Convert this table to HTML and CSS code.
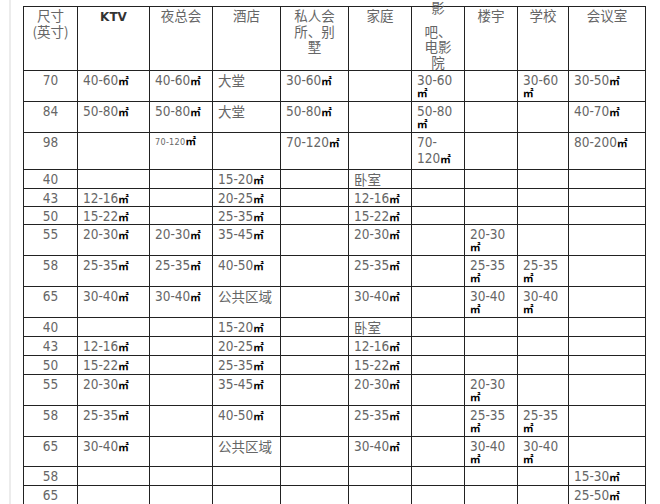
FILE: index.html
```html
<!DOCTYPE html>
<html lang="zh-CN">
<head>
<meta charset="utf-8">
<title>尺寸参考</title>
<link rel="stylesheet" href="styles.css">
</head>
<body>
<div class="page">
<table class="spec">
  <colgroup>
    <col class="c-size"><col class="c-ktv"><col class="c-club"><col class="c-hotel"><col class="c-villa">
    <col class="c-home"><col class="c-film"><col class="c-bldg"><col class="c-school"><col class="c-meet">
  </colgroup>
  <tr class="head">
    <th>尺寸<br>(英寸)</th>
    <th class="latin">KTV</th>
    <th>夜总会</th>
    <th>酒店</th>
    <th>私人会<br>所、别<br>墅</th>
    <th>家庭</th>
    <th><span class="lift">影</span><br>吧、<br>电影<br>院</th>
    <th>楼宇</th>
    <th>学校</th>
    <th>会议室</th>
  </tr>
  <tr class="r31">
    <td class="size"><span class="n">70</span></td>
    <td><span class="n">40-60</span><span class="u">㎡</span></td>
    <td><span class="n">40-60</span><span class="u">㎡</span></td>
    <td><span class="zh">大堂</span></td>
    <td><span class="n">30-60</span><span class="u">㎡</span></td>
    <td></td>
    <td><span class="n">30-60</span><br><span class="u">㎡</span></td>
    <td></td>
    <td><span class="n">30-60</span><br><span class="u">㎡</span></td>
    <td><span class="n">30-50</span><span class="u">㎡</span></td>
  </tr>
  <tr class="r31">
    <td class="size"><span class="n">84</span></td>
    <td><span class="n">50-80</span><span class="u">㎡</span></td>
    <td><span class="n">50-80</span><span class="u">㎡</span></td>
    <td><span class="zh">大堂</span></td>
    <td><span class="n">50-80</span><span class="u">㎡</span></td>
    <td></td>
    <td><span class="n">50-80</span><br><span class="u">㎡</span></td>
    <td></td>
    <td></td>
    <td><span class="n">40-70</span><span class="u">㎡</span></td>
  </tr>
  <tr class="r37">
    <td class="size"><span class="n">98</span></td>
    <td></td>
    <td><span class="sm">70-120</span><span class="u">㎡</span></td>
    <td></td>
    <td><span class="n">70-120</span><span class="u">㎡</span></td>
    <td></td>
    <td><span class="n">70-<br>120</span><span class="u">㎡</span></td>
    <td></td>
    <td></td>
    <td><span class="n">80-200</span><span class="u">㎡</span></td>
  </tr>
  <tr class="r19">
    <td class="size"><span class="n">40</span></td>
    <td></td><td></td>
    <td><span class="n">15-20</span><span class="u">㎡</span></td>
    <td></td>
    <td><span class="zh">卧室</span></td>
    <td></td><td></td><td></td><td></td>
  </tr>
  <tr class="r18">
    <td class="size"><span class="n">43</span></td>
    <td><span class="n">12-16</span><span class="u">㎡</span></td>
    <td></td>
    <td><span class="n">20-25</span><span class="u">㎡</span></td>
    <td></td>
    <td><span class="n">12-16</span><span class="u">㎡</span></td>
    <td></td><td></td><td></td><td></td>
  </tr>
  <tr class="r18">
    <td class="size"><span class="n">50</span></td>
    <td><span class="n">15-22</span><span class="u">㎡</span></td>
    <td></td>
    <td><span class="n">25-35</span><span class="u">㎡</span></td>
    <td></td>
    <td><span class="n">15-22</span><span class="u">㎡</span></td>
    <td></td><td></td><td></td><td></td>
  </tr>
  <tr class="r31">
    <td class="size"><span class="n">55</span></td>
    <td><span class="n">20-30</span><span class="u">㎡</span></td>
    <td><span class="n">20-30</span><span class="u">㎡</span></td>
    <td><span class="n">35-45</span><span class="u">㎡</span></td>
    <td></td>
    <td><span class="n">20-30</span><span class="u">㎡</span></td>
    <td></td>
    <td><span class="n">20-30</span><br><span class="u">㎡</span></td>
    <td></td><td></td>
  </tr>
  <tr class="r31">
    <td class="size"><span class="n">58</span></td>
    <td><span class="n">25-35</span><span class="u">㎡</span></td>
    <td><span class="n">25-35</span><span class="u">㎡</span></td>
    <td><span class="n">40-50</span><span class="u">㎡</span></td>
    <td></td>
    <td><span class="n">25-35</span><span class="u">㎡</span></td>
    <td></td>
    <td><span class="n">25-35</span><br><span class="u">㎡</span></td>
    <td><span class="n">25-35</span><br><span class="u">㎡</span></td>
    <td></td>
  </tr>
  <tr class="r31">
    <td class="size"><span class="n">65</span></td>
    <td><span class="n">30-40</span><span class="u">㎡</span></td>
    <td><span class="n">30-40</span><span class="u">㎡</span></td>
    <td><span class="zh">公共区域</span></td>
    <td></td>
    <td><span class="n">30-40</span><span class="u">㎡</span></td>
    <td></td>
    <td><span class="n">30-40</span><br><span class="u">㎡</span></td>
    <td><span class="n">30-40</span><br><span class="u">㎡</span></td>
    <td></td>
  </tr>
  <tr class="r18">
    <td class="size"><span class="n">40</span></td>
    <td></td><td></td>
    <td><span class="n">15-20</span><span class="u">㎡</span></td>
    <td></td>
    <td><span class="zh">卧室</span></td>
    <td></td><td></td><td></td><td></td>
  </tr>
  <tr class="r19">
    <td class="size"><span class="n">43</span></td>
    <td><span class="n">12-16</span><span class="u">㎡</span></td>
    <td></td>
    <td><span class="n">20-25</span><span class="u">㎡</span></td>
    <td></td>
    <td><span class="n">12-16</span><span class="u">㎡</span></td>
    <td></td><td></td><td></td><td></td>
  </tr>
  <tr class="r19">
    <td class="size"><span class="n">50</span></td>
    <td><span class="n">15-22</span><span class="u">㎡</span></td>
    <td></td>
    <td><span class="n">25-35</span><span class="u">㎡</span></td>
    <td></td>
    <td><span class="n">15-22</span><span class="u">㎡</span></td>
    <td></td><td></td><td></td><td></td>
  </tr>
  <tr class="r31">
    <td class="size"><span class="n">55</span></td>
    <td><span class="n">20-30</span><span class="u">㎡</span></td>
    <td></td>
    <td><span class="n">35-45</span><span class="u">㎡</span></td>
    <td></td>
    <td><span class="n">20-30</span><span class="u">㎡</span></td>
    <td></td>
    <td><span class="n">20-30</span><br><span class="u">㎡</span></td>
    <td></td><td></td>
  </tr>
  <tr class="r31">
    <td class="size"><span class="n">58</span></td>
    <td><span class="n">25-35</span><span class="u">㎡</span></td>
    <td></td>
    <td><span class="n">40-50</span><span class="u">㎡</span></td>
    <td></td>
    <td><span class="n">25-35</span><span class="u">㎡</span></td>
    <td></td>
    <td><span class="n">25-35</span><br><span class="u">㎡</span></td>
    <td><span class="n">25-35</span><br><span class="u">㎡</span></td>
    <td></td>
  </tr>
  <tr class="r30">
    <td class="size"><span class="n">65</span></td>
    <td><span class="n">30-40</span><span class="u">㎡</span></td>
    <td></td>
    <td><span class="zh">公共区域</span></td>
    <td></td>
    <td><span class="n">30-40</span><span class="u">㎡</span></td>
    <td></td>
    <td><span class="n">30-40</span><br><span class="u">㎡</span></td>
    <td><span class="n">30-40</span><br><span class="u">㎡</span></td>
    <td></td>
  </tr>
  <tr class="r19">
    <td class="size"><span class="n">58</span></td>
    <td></td><td></td><td></td><td></td><td></td><td></td><td></td><td></td>
    <td><span class="n">15-30</span><span class="u">㎡</span></td>
  </tr>
  <tr class="r19">
    <td class="size"><span class="n">65</span></td>
    <td></td><td></td><td></td><td></td><td></td><td></td><td></td><td></td>
    <td><span class="n">25-50</span><span class="u">㎡</span></td>
  </tr>
  <tr class="r19">
    <td class="size"></td>
    <td></td><td></td><td></td><td></td><td></td><td></td><td></td><td></td><td></td>
  </tr>
</table>
</div>
</body>
</html>
```

FILE: styles.css
```css
html, body {
  margin: 0;
  padding: 0;
  background: #ffffff;
}

body {
  font-family: "DejaVu Sans Condensed", "DejaVu Sans", sans-serif;
}

.page {
  margin-left: 9px;
  border-left: 2px solid #ececec;
  padding: 6px 0 0 12px;
  height: 504px;
  box-sizing: border-box;
  overflow: hidden;
}

.spec {
  border-collapse: collapse;
  table-layout: fixed;
  width: 622px;
  color: #666666;
}

.c-size { width: 54px; }
.c-ktv { width: 72px; }
.c-club { width: 63px; }
.c-hotel { width: 68px; }
.c-villa { width: 68px; }
.c-home { width: 63px; }
.c-film { width: 53px; }
.c-bldg { width: 53px; }
.c-school { width: 51px; }
.c-meet { width: 77px; }

.spec td,
.spec th {
  border: 1px solid #222222;
  vertical-align: top;
  font-size: 10px;
  line-height: 12px;
  overflow: visible;
}

.spec td {
  padding: 1px 0 0 5px;
  text-align: left;
  white-space: nowrap;
}

.spec th {
  padding: 1px 0 0;
  text-align: center;
  font-weight: normal;
  font-family: "Noto Sans CJK SC", sans-serif;
  font-size: 13.5px;
  line-height: 15.5px;
  color: #666666;
}

.head { height: 62px; }
.r18 { height: 18px; }
.r19 { height: 19px; }
.r30 { height: 30px; }
.r31 { height: 31px; }
.r37 { height: 37px; }

.spec th.latin {
  font-family: "DejaVu Sans", sans-serif;
  font-weight: 700;
  font-size: 12px;
  color: #333333;
  padding-top: 3px;
}

.lift {
  position: relative;
  top: -8px;
}

.spec td.size {
  text-align: center;
  padding-left: 0;
}

.n {
  font-size: 13.5px;
  line-height: 16px;
}

.sm {
  font-size: 9px;
  line-height: 16px;
  letter-spacing: 0.3px;
}

.zh {
  font-family: "Noto Sans CJK SC", sans-serif;
  font-size: 13.5px;
  line-height: 16px;
}

.u {
  font-family: "Noto Sans CJK SC", sans-serif;
  font-size: 10.5px;
  line-height: 9px;
  font-weight: 700;
  color: #000000;
}
```
